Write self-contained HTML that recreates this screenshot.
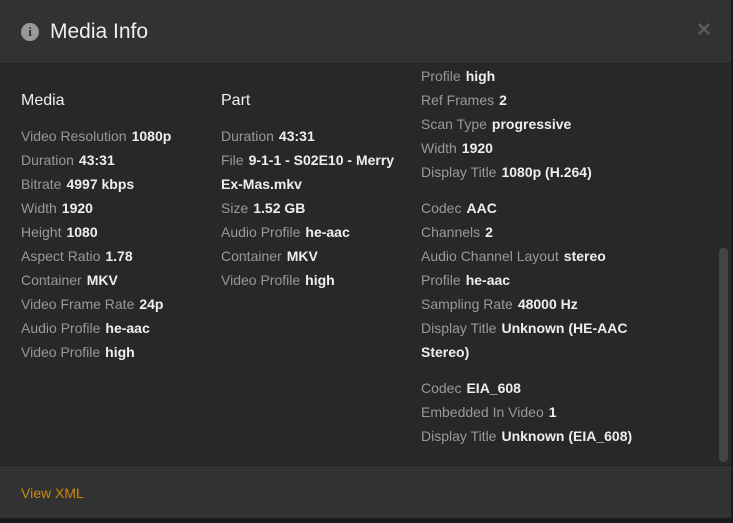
<!DOCTYPE html>
<html><head><meta charset="utf-8"><style>
*{margin:0;padding:0;box-sizing:border-box}
body{width:733px;height:523px;background:#1a1a1a;font-family:"Liberation Sans",sans-serif;overflow:hidden;position:relative}
.modal{position:absolute;left:0;top:0;width:731px;height:518px;background:#282828}
.hdr{position:absolute;left:0;top:0;width:731px;height:64px;background:#323232;border-bottom:1px solid #222}
.hdr .t{position:absolute;left:50px;top:20px;font-size:21px;color:#eee}
.ic{position:absolute;left:21px;top:23px;width:18px;height:18px;border-radius:50%;background:#999;color:#323232;font:bold 13px/18px "Liberation Serif",serif;text-align:center}
.x{position:absolute;left:696px;top:19px;color:#5a5a5a;font-size:19px;font-weight:bold}
.ftr{position:absolute;left:0;top:465px;width:731px;height:53px;background:#323232;border-top:1px solid #1e1e1e}
.ftr span{position:absolute;left:21px;top:19px;color:#c98a14;font-size:14px}
.col{position:absolute;font-size:14px;line-height:24px;color:#999}
.col b{color:#eee;font-weight:bold;margin-left:5px}
.h{font-size:16px;color:#eee;margin-bottom:11px;line-height:24px;margin-top:1px}
.gap{height:12px}
.thumb{position:absolute;left:719px;top:248px;width:9px;height:214px;background:#444;border-radius:4px}
</style></head><body>
<div class="modal">
<div class="hdr"><div class="ic">i</div><div class="t">Media Info</div><div class="x">✕</div></div>
<div class="col" style="left:21px;top:88px">
<div class="h">Media</div>
<div>Video Resolution<b>1080p</b></div>
<div>Duration<b>43:31</b></div>
<div>Bitrate<b>4997 kbps</b></div>
<div>Width<b>1920</b></div>
<div>Height<b>1080</b></div>
<div>Aspect Ratio<b>1.78</b></div>
<div>Container<b>MKV</b></div>
<div>Video Frame Rate<b>24p</b></div>
<div>Audio Profile<b>he-aac</b></div>
<div>Video Profile<b>high</b></div>
</div>
<div class="col" style="left:221px;top:88px">
<div class="h">Part</div>
<div>Duration<b>43:31</b></div>
<div>File<b>9-1-1 - S02E10 - Merry</b></div>
<div><b style="margin-left:0">Ex-Mas.mkv</b></div>
<div>Size<b>1.52 GB</b></div>
<div>Audio Profile<b>he-aac</b></div>
<div>Container<b>MKV</b></div>
<div>Video Profile<b>high</b></div>
</div>
<div class="col" style="left:421px;top:64px">
<div>Profile<b>high</b></div>
<div>Ref Frames<b>2</b></div>
<div>Scan Type<b>progressive</b></div>
<div>Width<b>1920</b></div>
<div>Display Title<b>1080p (H.264)</b></div>
<div class="gap"></div>
<div>Codec<b>AAC</b></div>
<div>Channels<b>2</b></div>
<div>Audio Channel Layout<b>stereo</b></div>
<div>Profile<b>he-aac</b></div>
<div>Sampling Rate<b>48000 Hz</b></div>
<div>Display Title<b>Unknown (HE-AAC</b></div>
<div><b style="margin-left:0">Stereo)</b></div>
<div class="gap"></div>
<div>Codec<b>EIA_608</b></div>
<div>Embedded In Video<b>1</b></div>
<div>Display Title<b>Unknown (EIA_608)</b></div>
</div>
<div class="thumb"></div>
<div class="ftr"><span>View XML</span></div>
</div>
</body></html>
